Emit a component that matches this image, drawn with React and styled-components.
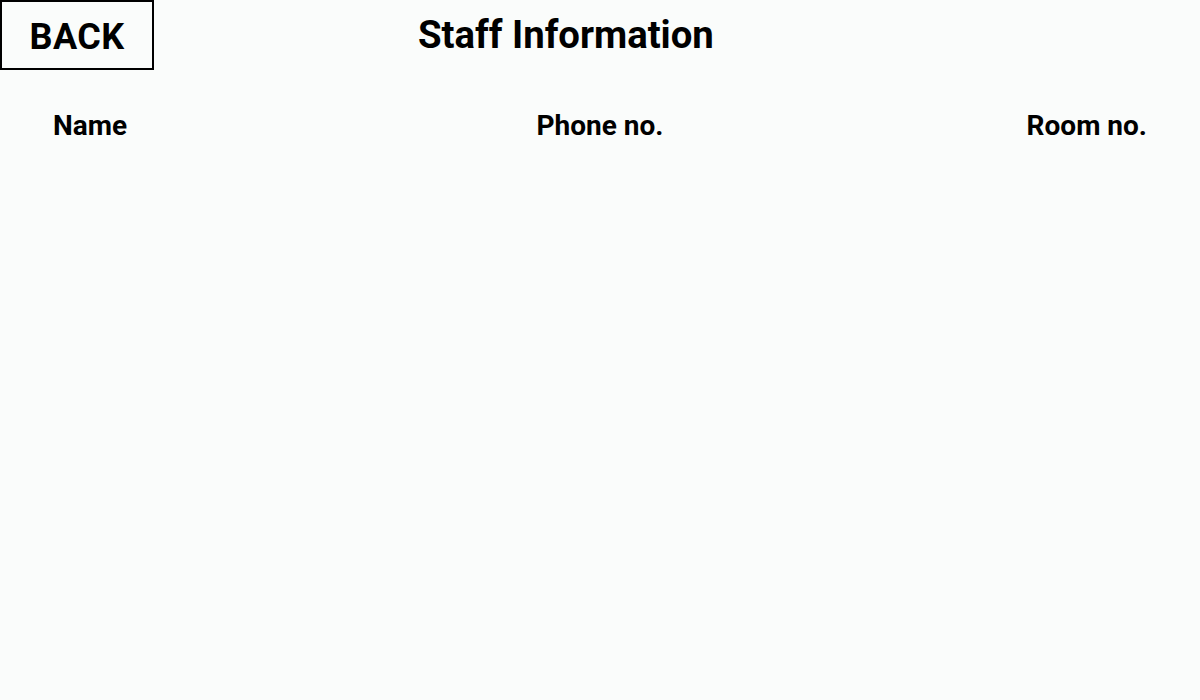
import styled, { createGlobalStyle } from "styled-components";

const GlobalStyle = createGlobalStyle`
  html, body {
    margin: 0;
    background: #fafcfb;
    font-family: "Roboto", "Liberation Sans", sans-serif;
  }
`;

function App() {
  return (
    <Page>
      <GlobalStyle />
      <TopBar>
        <BackButton>BACK</BackButton>
        <Title>Staff Information</Title>
      </TopBar>
      <HeaderRow>
        <Column align="start">Name</Column>
        <Column align="center">Phone no.</Column>
        <Column align="end">Room no.</Column>
      </HeaderRow>
    </Page>
  );
}

const Page = styled.div`
  width: 1200px;
  height: 700px;
  background: #fafcfb;
  color: #000;
`;

const TopBar = styled.div`
  display: flex;
  align-items: flex-start;
`;

const BackButton = styled.button`
  width: 154px;
  height: 70px;
  border: 2px solid #000;
  background: transparent;
  font-family: inherit;
  font-weight: 700;
  font-size: 36px;
  letter-spacing: 0.4px;
  color: #000;
  padding: 0;
  padding-top: 4px;
  cursor: pointer;
`;

const Title = styled.h1`
  margin: 0 0 0 264px;
  padding-top: 13px;
  font-size: 38.3px;
  font-weight: 700;
  line-height: 44px;
`;

const HeaderRow = styled.div`
  display: grid;
  grid-template-columns: 1fr auto 1fr;
  padding: 0 53px;
  margin-top: 36px;
`;

const Column = styled.div`
  justify-self: ${(p) => p.align};
  font-size: 28px;
  font-weight: 700;
  line-height: 40px;
`;

export default App;
